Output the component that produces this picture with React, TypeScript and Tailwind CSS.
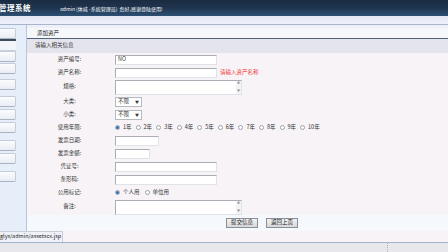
import type { ReactNode } from "react"

const years = ["1年", "2年", "3年", "4年", "5年", "6年", "7年", "8年", "9年", "10年"]

function Radio({ checked, label }: { checked?: boolean; label: string }) {
  return (
    <span className="flex items-center gap-[3px]">
      <span className="flex h-[5px] w-[5px] items-center justify-center rounded-full border-[0.5px] border-[#9aa3ad] bg-white">
        {checked && <span className="h-[3px] w-[3px] rounded-full bg-[#2f6fb8]" />}
      </span>
      <span>{label}</span>
    </span>
  )
}

function Input({ w, value }: { w: string; value?: string }) {
  return (
    <div
      className={`${w} flex h-[10px] items-center border-[0.5px] border-t-[#a9adb4] border-l-[#a9adb4] border-r-[#dfe2e6] border-b-[#dfe2e6] bg-white pl-[2px] text-[#444]`}
    >
      {value}
    </div>
  )
}

function TextArea() {
  return (
    <div className="flex h-[15px] w-[127px] border-[0.5px] border-t-[#a9adb4] border-l-[#a9adb4] border-r-[#dfe2e6] border-b-[#dfe2e6] bg-white">
      <div className="flex-1" />
      <div className="flex w-[5px] flex-col items-center justify-between bg-[#f4f4f6] py-[1px] text-[3px] leading-none text-[#888]">
        <span>▲</span>
        <span>▼</span>
      </div>
    </div>
  )
}

function Select() {
  return (
    <div className="flex h-[10px] w-[27px] items-center justify-between border-[0.5px] border-[#b5b9c0] bg-white px-[2px] text-[#333]">
      <span>不限</span>
      <span className="text-[4px]">▼</span>
    </div>
  )
}

function Row({ label, h = "h-[13px]", children }: { label: string; h?: string; children: ReactNode }) {
  return (
    <div className={`flex ${h} items-center`}>
      <div className="w-[85px] text-center text-[#333]">{label}</div>
      <div className="flex items-center gap-[3px] pl-[3px]">{children}</div>
    </div>
  )
}

function SideBtn({ mt }: { mt: string }) {
  return (
    <div
      className={`${mt} h-[11px] w-[16px] rounded-r-[2px] border-[0.5px] border-l-0 border-[#c3ccd8] border-b-[#aab4c2] bg-gradient-to-b from-[#fbfcfe] to-[#e9edf3]`}
    />
  )
}

export default function App() {
  return (
    <div className="relative flex h-[252px] w-[448px] flex-col overflow-hidden bg-[#f7f3f7] font-[family-name:'Noto_Sans_CJK_SC','Liberation_Sans',sans-serif] text-[5.5px] leading-none">
      {/* header */}
      <div className="flex h-[16px] items-center bg-gradient-to-b from-[#1a2c40] via-[#1e3550] to-[#2c5073]">
        <div className="ml-[-1px] w-[61px] text-[7.5px] font-bold tracking-[0.5px] text-white">管理系统</div>
        <div className="text-[5px] text-white">admin (体威 -系统管理员)&nbsp;&nbsp;您好,感谢登陆使用!</div>
      </div>
      <div className="h-[9px] border-b border-[#a9b5cc] bg-gradient-to-b from-[#e3e7f1] to-[#eef1f8]" />

      <div className="flex h-[217px]">
        {/* sidebar */}
        <div className="flex w-[27px] flex-col border-r border-[#b7c6dd] bg-[#e6eef9]">
          <SideBtn mt="mt-[3px]" />
          <div className="h-[1.5px] w-[16px] bg-[#3d4a57]" />
          <div className="h-[10px] w-[16px] border-b-[0.5px] border-[#cbd3de] bg-[#f1f4f9]" />
          <SideBtn mt="mt-0" />
          <SideBtn mt="mt-[1px]" />
          <SideBtn mt="mt-[5px]" />
          <SideBtn mt="mt-[6px]" />
          <SideBtn mt="mt-[2px]" />
          <SideBtn mt="mt-[2px]" />
          <SideBtn mt="mt-[7px]" />
          <SideBtn mt="mt-[2px]" />
          <SideBtn mt="mt-[7px]" />
        </div>

        {/* main */}
        <div className="flex flex-1 flex-col">
          <div className="h-[3px] bg-[#eef0f7]" />
          <div className="flex h-[11px] items-center border-b border-[#4f6379] bg-[#f6f7fb] pl-[10px] pt-[1px] text-[#222]">添加资产</div>
          <div className="flex h-[14px] items-center bg-[#e4e4ec] pl-[8px] text-[#333]">请输入相关信息</div>
          <div className="flex flex-col">
            <Row label="资产编号:">
              <Input w="w-[102px]" value="NO" />
            </Row>
            <Row label="资产名称:">
              <Input w="w-[102px]" />
              <span className="text-[#f03a3a]">请输入资产名称</span>
            </Row>
            <Row label="规格:" h="h-[16px]">
              <TextArea />
            </Row>
            <Row label="大类:">
              <Select />
            </Row>
            <Row label="小类:">
              <Select />
            </Row>
            <Row label="使用年限:">
              <div className="flex items-center gap-[4px] text-[#333]">
                {years.map((y, i) => (
                  <Radio key={y} label={y} checked={i === 0} />
                ))}
              </div>
            </Row>
            <Row label="发票日期:">
              <Input w="w-[44px]" />
            </Row>
            <Row label="发票金额:">
              <Input w="w-[35px]" />
            </Row>
            <Row label="凭证号:">
              <Input w="w-[102px]" />
            </Row>
            <Row label="条形码:">
              <Input w="w-[102px]" />
            </Row>
            <Row label="公用标记:">
              <div className="flex items-center gap-[5px] text-[#333]">
                <Radio label="个人用" checked />
                <Radio label="单位用" />
              </div>
            </Row>
            <Row label="备注:" h="h-[16px]">
              <TextArea />
            </Row>
          </div>
          <div className="flex h-[16px] items-center gap-[8px] bg-[#f5f8fd] pl-[199px]">
            <button className="flex h-[10px] w-[32px] items-center justify-center border-[0.5px] border-[#8b8f96] bg-gradient-to-b from-[#f2f2f2] to-[#d6d7da] text-[#222]">
              提交信息
            </button>
            <button className="flex h-[10px] w-[32px] items-center justify-center border-[0.5px] border-[#8b8f96] bg-gradient-to-b from-[#f2f2f2] to-[#d6d7da] text-[#222]">
              返回上页
            </button>
          </div>
        </div>
      </div>

      {/* status bar */}
      <div className="relative flex h-[10px] border-t border-[#a3b3ca] bg-[#e8e8ec]">
        <div className="ml-[387px] h-full border-l border-dotted border-[#b0b0b8]" />
        <div className="absolute bottom-[10px] left-0 flex h-[11px] w-[63px] items-center border-t-[0.5px] border-r-[0.5px] border-[#c8cdd6] bg-[#eef1f7] text-[5.5px] text-[#222]">
          glys/admin/assetscx.jsp
        </div>
      </div>
    </div>
  )
}
